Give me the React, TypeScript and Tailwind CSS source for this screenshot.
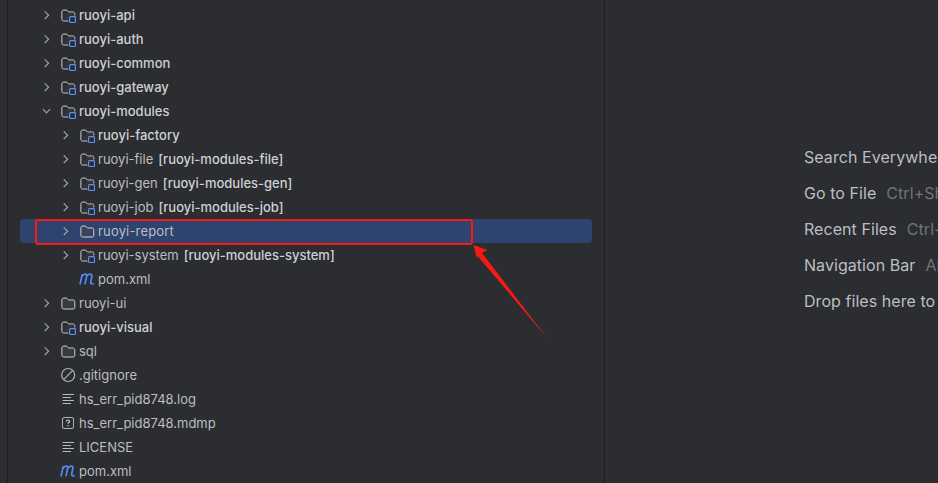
import React from "react";

type Kind = "module" | "folder" | "ignore" | "lines" | "unknown" | "maven";
type Row = {
  name: string;
  tag?: string;
  level: number;
  kind: Kind;
  bold?: boolean;
  chevron?: "right" | "down";
  selected?: boolean;
};

const rows: Row[] = [
  { name: "ruoyi-api", level: 0, kind: "module", bold: true, chevron: "right" },
  { name: "ruoyi-auth", level: 0, kind: "module", bold: true, chevron: "right" },
  { name: "ruoyi-common", level: 0, kind: "module", bold: true, chevron: "right" },
  { name: "ruoyi-gateway", level: 0, kind: "module", bold: true, chevron: "right" },
  { name: "ruoyi-modules", level: 0, kind: "module", bold: true, chevron: "down" },
  { name: "ruoyi-factory", level: 1, kind: "module", bold: true, chevron: "right" },
  { name: "ruoyi-file", tag: "[ruoyi-modules-file]", level: 1, kind: "module", chevron: "right" },
  { name: "ruoyi-gen", tag: "[ruoyi-modules-gen]", level: 1, kind: "module", chevron: "right" },
  { name: "ruoyi-job", tag: "[ruoyi-modules-job]", level: 1, kind: "module", chevron: "right" },
  { name: "ruoyi-report", level: 1, kind: "folder", chevron: "right", selected: true },
  { name: "ruoyi-system", tag: "[ruoyi-modules-system]", level: 1, kind: "module", chevron: "right" },
  { name: "pom.xml", level: 1, kind: "maven" },
  { name: "ruoyi-ui", level: 0, kind: "folder", chevron: "right" },
  { name: "ruoyi-visual", level: 0, kind: "module", bold: true, chevron: "right" },
  { name: "sql", level: 0, kind: "folder", chevron: "right" },
  { name: ".gitignore", level: 0, kind: "ignore" },
  { name: "hs_err_pid8748.log", level: 0, kind: "lines" },
  { name: "hs_err_pid8748.mdmp", level: 0, kind: "unknown" },
  { name: "LICENSE", level: 0, kind: "lines" },
  { name: "pom.xml", level: 0, kind: "maven" },
];

const hints = [
  { label: "Search Everywhere", key: "Double Shift" },
  { label: "Go to File", key: "Ctrl+Shift+N" },
  { label: "Recent Files", key: "Ctrl+E" },
  { label: "Navigation Bar", key: "Alt+Home" },
  { label: "Drop files here to open them", key: "" },
];

function Chevron({ dir }: { dir?: "right" | "down" }) {
  return (
    <svg width="16" height="16" viewBox="0 0 16 16" fill="none" className="shrink-0">
      {dir === "right" && <path d="M6.7 4.4 10.6 8.2 6.7 12" stroke="#9da0a8" strokeWidth="1.2" />}
      {dir === "down" && <path d="M5 6.2 8.5 9.8 12 6.2" stroke="#9da0a8" strokeWidth="1.2" />}
    </svg>
  );
}

const folderPath =
  "M1.9 4.7C1.9 3.8 2.6 3.1 3.5 3.1H6.2C6.6 3.1 6.9 3.3 7.2 3.5L8.6 5H13.2C14.1 5 14.8 5.7 14.8 6.6V12.4C14.8 13.3 14.1 14 13.2 14H3.5C2.6 14 1.9 13.3 1.9 12.4Z";

function Icon({ kind }: { kind: Kind }) {
  const common = { width: 16, height: 16, viewBox: "0 0 16 16", fill: "none", className: "shrink-0" };
  if (kind === "folder") {
    return (
      <svg {...common}>
        <path d={folderPath} fill="#43454a" fillOpacity="0.55" stroke="#ced0d6" strokeWidth="1" />
      </svg>
    );
  }
  if (kind === "module") {
    return (
      <svg {...common}>
        <path
          d="M8.5 14H3.5C2.6 14 1.9 13.3 1.9 12.4V4.7C1.9 3.8 2.6 3.1 3.5 3.1H6.2C6.6 3.1 6.9 3.3 7.2 3.5L8.6 5H13.2C14.1 5 14.8 5.7 14.8 6.6V8.5"
          stroke="#ced0d6"
          strokeWidth="1"
        />
        <path d="M8.6 5.5H13.2C14 5.5 14.3 5.9 14.3 6.6V8.5H8.5V13.5H3L8 5.5Z" fill="#43454a" fillOpacity="0.45" />
        <rect x="9.6" y="9.6" width="5.9" height="5.9" rx="1.2" stroke="#5c92fa" strokeWidth="1.2" />
      </svg>
    );
  }
  if (kind === "ignore") {
    return (
      <svg {...common}>
        <circle cx="8.2" cy="8" r="6.5" stroke="#aeb1b8" strokeWidth="1.2" />
        <path d="M12.8 3.4 3.6 12.6" stroke="#aeb1b8" strokeWidth="1.2" />
      </svg>
    );
  }
  if (kind === "lines") {
    return (
      <svg {...common}>
        <path d="M2.5 3.5H14M2.5 6.5H11M2.5 9.5H14M2.5 12.5H11" stroke="#b6b8be" strokeWidth="1" />
      </svg>
    );
  }
  if (kind === "unknown") {
    return (
      <svg {...common}>
        <rect x="2.5" y="2.5" width="11" height="11" rx="1.5" stroke="#aeb1b8" strokeWidth="1" />
        <path
          d="M6.4 6.4C6.4 5.5 7.1 5 8 5S9.6 5.6 9.6 6.4C9.6 7.5 8 7.6 8 8.8"
          stroke="#ced0d6"
          strokeWidth="1.2"
        />
        <path d="M8 10V11.2" stroke="#ced0d6" strokeWidth="1.3" />
      </svg>
    );
  }
  return (
    <svg {...common}>
      <path
        d="M1 13.4 3.2 3.4M2.9 5.4C3.7 3.9 4.8 3.2 6 3.2C7.5 3.2 8 4.1 7.7 5.4L5.9 13.4M7.7 5.4C8.6 3.9 9.8 3.2 11 3.2C12.6 3.2 13.2 4.1 12.9 5.4L11.7 11C11.4 12.5 12.2 13.2 14.6 12.9"
        stroke="#548af7"
        strokeWidth="1.7"
      />
    </svg>
  );
}

function TreeRow({ row }: { row: Row }) {
  return (
    <div
      className={`mx-3 flex h-6 shrink-0 items-center rounded-[3px] ${row.selected ? "bg-[#2e436e]" : ""} ${
        row.level === 1 ? "pl-[37px]" : "pl-[18px]"
      }`}
    >
      <Chevron dir={row.chevron} />
      <span className="ml-[6px] mr-[3px] flex">
        <Icon kind={row.kind} />
      </span>
      <span
        className={`whitespace-nowrap pt-[2px] text-[13px] ${
          row.bold ? "font-medium text-[#ced0d6]" : "text-[#bcbec4]"
        } ${row.selected ? "tracking-[0.17px]" : ""}`}
      >
        {row.name}
      </span>
      {row.tag && (
        <span className="ml-[5px] whitespace-nowrap pt-[2px] text-[13px] font-medium text-[#ced0d6]">{row.tag}</span>
      )}
    </div>
  );
}

export default function App() {
  return (
    <div className="relative flex h-[483px] w-[938px] overflow-hidden bg-[#2b2d30] font-['Inter',sans-serif]">
      <div className="w-[7px] shrink-0 border-r border-[#1e1f22] box-content" />
      <div className="flex w-[596px] shrink-0 flex-col border-r border-[#1e1f22] pt-[3px] box-content">
        {rows.map((row, i) => (
          <TreeRow key={i} row={row} />
        ))}
      </div>
      <div className="flex min-w-0 flex-1 flex-col gap-[12px] pl-[199px] pt-[145px]">
        {hints.map((h) => (
          <div
            key={h.label}
            className="flex h-6 items-center whitespace-nowrap text-[16px] tracking-[0.06px] text-[#bcbec4]"
          >
            {h.label}
            {h.key && <span className="ml-[10px] text-[#6f737a]">{h.key}</span>}
          </div>
        ))}
      </div>

      <div className="absolute left-[35px] top-[219px] h-[26px] w-[438px] rounded-[3px] border-[2.5px] border-[#f51b14]" />
      <svg className="absolute left-0 top-0" width="938" height="483" viewBox="0 0 938 483" fill="none">
        <path d="M473.5 245 487.5 250 482 253 547 338 477.5 256 477 259Z" fill="#f51b14" />
      </svg>
    </div>
  );
}
